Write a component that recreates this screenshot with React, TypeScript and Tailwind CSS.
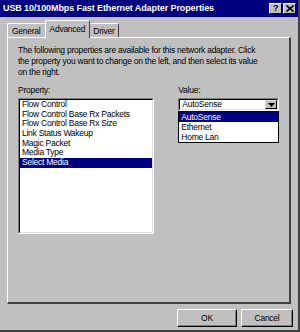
import React from "react";

const font = { fontFamily: '"Liberation Sans", Arial, sans-serif' };

export default function App() {
  const props = [
    "Flow Control",
    "Flow Control Base Rx Packets",
    "Flow Control Base Rx Size",
    "Link Status Wakeup",
    "Magic Packet",
    "Media Type",
    "Select Media",
  ];
  return (
    <div
      className="w-[300px] h-[332px] bg-[#c0c0c0] flex flex-col border-r-2 border-b-2 border-r-[#404040] border-b-[#404040] text-black text-[8.5px] tracking-[-0.25px] leading-[11px] overflow-hidden"
      style={font}
    >
      {/* title bar */}
      <div className="h-[17px] bg-[#000080] flex items-center pl-[3px] pr-[2px] shrink-0">
        <div className="text-white font-bold text-[9px] flex-1 whitespace-nowrap tracking-[-0.1px]">
          USB 10/100Mbps Fast Ethernet Adapter Properties
        </div>
        <div className="flex gap-[1px]">
          <div className="w-[13px] h-[11px] bg-[#c0c0c0] border border-t-white border-l-white border-r-black border-b-black flex items-center justify-center text-[9px] font-bold leading-none">?</div>
          <div className="w-[13px] h-[11px] bg-[#c0c0c0] border border-t-white border-l-white border-r-black border-b-black flex items-center justify-center">
            <svg width="8" height="7" viewBox="0 0 8 7">
              <path d="M0.5 0.5 L7.5 6.5 M7.5 0.5 L0.5 6.5" stroke="black" strokeWidth="1.6" />
            </svg>
          </div>
        </div>
      </div>

      {/* tabs */}
      <div className="flex items-end pl-[7px] mt-[3px] h-[18px] shrink-0">
        <div className="h-[15px] px-[4px] border-t border-l border-white border-r border-r-[#404040] rounded-t-[2px] flex items-center">General</div>
        <div className="h-[18px] px-[4px] border-t border-l border-white border-r border-r-[#404040] rounded-t-[2px] flex items-center -mx-[1px] bg-[#c0c0c0] relative z-10">Advanced</div>
        <div className="h-[15px] px-[4px] border-t border-white border-r border-r-[#404040] rounded-t-[2px] flex items-center">Driver</div>
      </div>

      {/* panel */}
      <div className="mx-[7px] h-[267px] border-l border-t border-white border-r-2 border-b-2 border-r-[#404040] border-b-[#404040] -mt-[1px] px-[10px] pt-[7px] flex flex-col">
        <div className="w-[246px]">
          The following properties are available for this network adapter. Click the property you want to change on the left, and then select its value on the right.
        </div>
        <div className="flex mt-[7px]">
          <div className="w-[138px] flex flex-col">
            <div className="mb-[2px]">Property:</div>
            <div className="h-[136px] bg-white border border-t-[#808080] border-l-[#808080] border-r-white border-b-white">
              <div className="h-full border border-t-black border-l-black border-r-[#dfdfdf] border-b-[#dfdfdf]">
                {props.map((p) => (
                  <div
                    key={p}
                    className={
                      "h-[9.7px] leading-[9.7px] pl-[2px] " +
                      (p === "Select Media" ? "bg-[#000080] text-white" : "")
                    }
                  >
                    {p}
                  </div>
                ))}
              </div>
            </div>
          </div>
          <div className="ml-[24px] w-[102px] flex flex-col">
            <div className="mb-[2px]">Value:</div>
            <div className="h-[13px] bg-white border border-t-[#808080] border-l-[#808080] border-r-white border-b-white">
              <div className="h-full border border-t-black border-l-black border-r-[#dfdfdf] border-b-[#dfdfdf] flex items-center pl-[2px]">
                <span className="flex-1">AutoSense</span>
                <div className="w-[12px] h-full bg-[#c0c0c0] border border-t-[#dfdfdf] border-l-[#dfdfdf] border-r-black border-b-black flex items-center justify-center">
                  <svg width="7" height="4" viewBox="0 0 7 4">
                    <path d="M0 0 H7 L3.5 4 Z" fill="black" />
                  </svg>
                </div>
              </div>
            </div>
            <div className="bg-white border border-black">
              {["AutoSense", "Ethernet", "Home Lan"].map((v, i) => (
                <div key={v} className={"h-[10px] leading-[10px] pl-[2px] " + (i === 0 ? "bg-[#000080] text-white" : "")}>
                  {v}
                </div>
              ))}
            </div>
          </div>
        </div>
      </div>

      {/* buttons */}
      <div className="flex justify-end gap-[4px] mt-[5px] pr-[5px]">
        <div className="w-[60px] h-[18px] border border-t-white border-l-white border-r-black border-b-black">
          <div className="h-full border border-transparent border-r-[#808080] border-b-[#808080] flex items-center justify-center">OK</div>
        </div>
        <div className="w-[52px] h-[18px] border border-t-white border-l-white border-r-black border-b-black">
          <div className="h-full border border-transparent border-r-[#808080] border-b-[#808080] flex items-center justify-center">Cancel</div>
        </div>
      </div>
    </div>
  );
}
